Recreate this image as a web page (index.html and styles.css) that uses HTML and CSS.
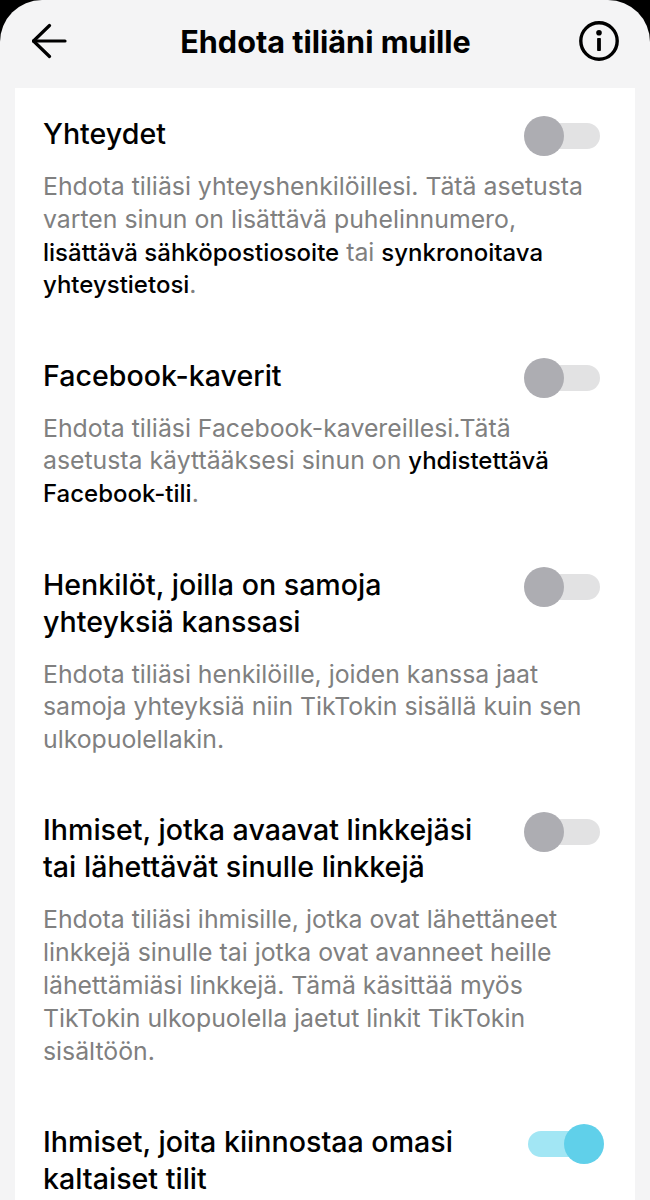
FILE: index.html
```html
<!DOCTYPE html>
<html lang="fi">
<head>
    <meta charset="UTF-8">
    <meta name="viewport" content="width=device-width, initial-scale=1.0">
    <title>Ehdota tiliäni muille</title>
    <link rel="stylesheet" href="styles.css">
</head>
<body>
    <div class="screen">
        <header class="top-bar">
            <svg class="icon-back" width="36" height="36" viewBox="0 0 36 36" fill="none" stroke="#000" stroke-width="3.2" stroke-linecap="round" stroke-linejoin="round">
                <path d="M1.5 18h31.5"/>
                <path d="M17.5 2.5 1.5 18l16 15.5"/>
            </svg>
            <h1 class="page-title">Ehdota tiliäni muille</h1>
            <svg class="icon-info" width="40" height="40" viewBox="0 0 40 40" fill="none">
                <circle cx="20" cy="20" r="18.2" stroke="#000" stroke-width="3.4"/>
                <circle cx="20" cy="11.8" r="2.8" fill="#000"/>
                <rect x="18.1" y="17" width="3.8" height="13" rx="0.8" fill="#000"/>
            </svg>
        </header>

        <main class="card">
            <!-- Yhteydet -->
            <section class="setting">
                <div class="setting-head">
                    <h2 class="setting-title">Yhteydet</h2>
                    <span class="toggle"></span>
                </div>
                <p class="setting-desc">Ehdota tiliäsi yhteyshenkilöillesi. Tätä asetusta<br>varten sinun on lisättävä puhelinnumero,<br><a class="link">lisättävä sähköpostiosoite</a> tai <a class="link">synkronoitava</a><br><a class="link">yhteystietosi</a>.</p>
            </section>

            <!-- Facebook -->
            <section class="setting">
                <div class="setting-head">
                    <h2 class="setting-title">Facebook-kaverit</h2>
                    <span class="toggle"></span>
                </div>
                <p class="setting-desc">Ehdota tiliäsi Facebook-kavereillesi.Tätä<br>asetusta käyttääksesi sinun on <a class="link">yhdistettävä</a><br><a class="link">Facebook-tili</a>.</p>
            </section>

            <!-- Samat yhteydet -->
            <section class="setting">
                <div class="setting-head">
                    <h2 class="setting-title">Henkilöt, joilla on samoja<br>yhteyksiä kanssasi</h2>
                    <span class="toggle"></span>
                </div>
                <p class="setting-desc">Ehdota tiliäsi henkilöille, joiden kanssa jaat<br>samoja yhteyksiä niin TikTokin sisällä kuin sen<br>ulkopuolellakin.</p>
            </section>

            <!-- Linkit -->
            <section class="setting">
                <div class="setting-head">
                    <h2 class="setting-title">Ihmiset, jotka avaavat linkkejäsi<br>tai lähettävät sinulle linkkejä</h2>
                    <span class="toggle"></span>
                </div>
                <p class="setting-desc">Ehdota tiliäsi ihmisille, jotka ovat lähettäneet<br>linkkejä sinulle tai jotka ovat avanneet heille<br>lähettämiäsi linkkejä. Tämä käsittää myös<br>TikTokin ulkopuolella jaetut linkit TikTokin<br>sisältöön.</p>
            </section>

            <!-- Kiinnostuneet -->
            <section class="setting">
                <div class="setting-head">
                    <h2 class="setting-title">Ihmiset, joita kiinnostaa omasi<br>kaltaiset tilit</h2>
                    <span class="toggle on"></span>
                </div>
            </section>
        </main>
    </div>
</body>
</html>
```

FILE: styles.css
```css
html, body {
    height: 100%;
}

body {
    margin: 0;
    background: #000;
    font-family: Inter, Roboto, Arial, sans-serif;
    overflow: hidden;
}

.screen {
    height: 1200px;
    padding: 0 15px;
    box-sizing: border-box;
    background: #f4f4f5;
    border-radius: 42px 42px 0 0;
    overflow: hidden;
}

.top-bar {
    height: 88px;
    display: flex;
    align-items: center;
    justify-content: space-between;
    padding: 0 16px 6px 17px;
    box-sizing: border-box;
}

.page-title {
    margin: 0 0 0 4px;
    font-size: 30.6px;
    font-weight: 700;
    color: #000;
}

.card {
    background: #fff;
    padding: 27px 35px 0 28px;
    height: 1112px;
    box-sizing: border-box;
}

.setting {
    margin-bottom: 55.5px;
}

.setting-head {
    display: flex;
    justify-content: space-between;
    align-items: flex-start;
}

.setting-title {
    margin: 0;
    font-size: 28.6px;
    line-height: 37px;
    font-weight: 500;
    color: #000;
}

.setting-desc {
    margin: 18px 0 0;
    font-size: 24.8px;
    line-height: 32.8px;
    color: #808080;
}

.link {
    font-size: 24px;
    font-weight: 500;
    line-height: 1;
    color: #000;
}

/* kytkin: nuppi raidan päällä */
.toggle {
    position: relative;
    flex: none;
    width: 76px;
    height: 40px;
    margin: 1px 0 -4px;
}

.toggle::before {
    content: "";
    position: absolute;
    top: 7px;
    left: 6px;
    right: 0;
    height: 26px;
    border-radius: 13px;
    background: #e2e2e3;
}

.toggle::after {
    content: "";
    position: absolute;
    top: 0;
    left: 0;
    width: 40px;
    height: 40px;
    border-radius: 50%;
    background: #adadb2;
}

.toggle.on {
    margin-right: -4px;
}

.toggle.on::before {
    left: 0;
    right: 6px;
    background: #a2e6f4;
}

.toggle.on::after {
    left: 36px;
    background: #60d0ea;
}
```
